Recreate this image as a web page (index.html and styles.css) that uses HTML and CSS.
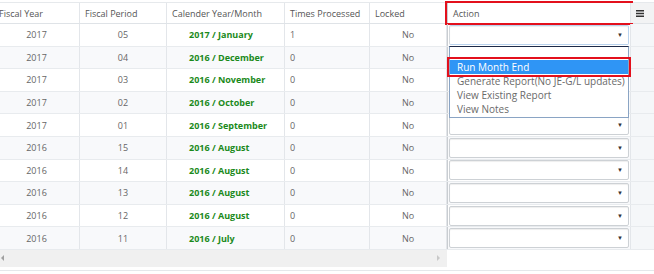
FILE: index.html
```html
<!DOCTYPE html>
<html lang="en">
<head>
    <meta charset="UTF-8" />
    <title>Month End</title>
    <link rel="stylesheet" href="styles.css">
</head>
<body>
    <div class="grid">
        <div class="grid-body">
            <!-- scrolled columns -->
            <div class="scroll-pane">
                <div class="scroll-cols">
                    <div class="row head">
                        <div class="cell">Fiscal Year</div>
                        <div class="cell">Fiscal Period</div>
                        <div class="cell">Calender Year/Month</div>
                        <div class="cell">Times Processed</div>
                        <div class="cell">Locked</div>
                    </div>
                    <div class="row">
                        <div class="cell center">2017</div><div class="cell center">05</div>
                        <div class="cell month">2017 / January</div><div class="cell">1</div><div class="cell center">No</div>
                    </div>
                    <div class="row alt">
                        <div class="cell center">2017</div><div class="cell center">04</div>
                        <div class="cell month">2016 / December</div><div class="cell">0</div><div class="cell center">No</div>
                    </div>
                    <div class="row">
                        <div class="cell center">2017</div><div class="cell center">03</div>
                        <div class="cell month">2016 / November</div><div class="cell">0</div><div class="cell center">No</div>
                    </div>
                    <div class="row alt">
                        <div class="cell center">2017</div><div class="cell center">02</div>
                        <div class="cell month">2016 / October</div><div class="cell">0</div><div class="cell center">No</div>
                    </div>
                    <div class="row">
                        <div class="cell center">2017</div><div class="cell center">01</div>
                        <div class="cell month">2016 / September</div><div class="cell">0</div><div class="cell center">No</div>
                    </div>
                    <div class="row alt">
                        <div class="cell center">2016</div><div class="cell center">15</div>
                        <div class="cell month">2016 / August</div><div class="cell">0</div><div class="cell center">No</div>
                    </div>
                    <div class="row">
                        <div class="cell center">2016</div><div class="cell center">14</div>
                        <div class="cell month">2016 / August</div><div class="cell">0</div><div class="cell center">No</div>
                    </div>
                    <div class="row alt">
                        <div class="cell center">2016</div><div class="cell center">13</div>
                        <div class="cell month">2016 / August</div><div class="cell">0</div><div class="cell center">No</div>
                    </div>
                    <div class="row">
                        <div class="cell center">2016</div><div class="cell center">12</div>
                        <div class="cell month">2016 / August</div><div class="cell">0</div><div class="cell center">No</div>
                    </div>
                    <div class="row alt">
                        <div class="cell center">2016</div><div class="cell center">11</div>
                        <div class="cell month">2016 / July</div><div class="cell">0</div><div class="cell center">No</div>
                    </div>
                </div>
            </div>

            <!-- pinned action column -->
            <div class="pin-pane">
                <div class="pin-row head">
                    <div class="cell action-head marked">Action</div>
                    <div class="cell menu-head">
                        <svg width="8" height="7" viewBox="0 0 8 7"><path d="M0 0.75H8M0 3.5H8M0 6.25H8" stroke="#333" stroke-width="1.4"/></svg>
                    </div>
                </div>
                <div class="pin-row"><div class="cell action"><div class="select focused"><span class="caret">▼</span></div></div><div class="cell menu"></div></div>
                <!-- rows 2-4 sit under the open list -->
                <div class="pin-row alt"><div class="cell action"><div class="select"></div></div><div class="cell menu"></div></div>
                <div class="pin-row"><div class="cell action"><div class="select"></div></div><div class="cell menu"></div></div>
                <div class="pin-row alt"><div class="cell action"><div class="select"></div></div><div class="cell menu"></div></div>
                <div class="pin-row"><div class="cell action"><div class="select"><span class="caret">▼</span></div></div><div class="cell menu"></div></div>
                <div class="pin-row alt"><div class="cell action"><div class="select"><span class="caret">▼</span></div></div><div class="cell menu"></div></div>
                <div class="pin-row"><div class="cell action"><div class="select"><span class="caret">▼</span></div></div><div class="cell menu"></div></div>
                <div class="pin-row alt"><div class="cell action"><div class="select"><span class="caret">▼</span></div></div><div class="cell menu"></div></div>
                <div class="pin-row"><div class="cell action"><div class="select"><span class="caret">▼</span></div></div><div class="cell menu"></div></div>
                <div class="pin-row alt"><div class="cell action"><div class="select"><span class="caret">▼</span></div></div><div class="cell menu"></div></div>

                <!-- open select list -->
                <ul class="dropdown">
                    <li class="empty"></li>
                    <li class="selected marked">Run Month End</li>
                    <li>Generate Report(No JE-G/L updates)</li>
                    <li>View Existing Report</li>
                    <li>View Notes</li>
                </ul>
            </div>
        </div>

        <div class="hscroll">
            <div class="track">
                <span class="arrow-left"></span>
                <span class="arrow-right"></span>
            </div>
        </div>
    </div>
</body>
</html>
```

FILE: styles.css
```css
body {
    margin: 0;
    font-family: "Open Sans", "Liberation Sans", sans-serif;
    background: #fff;
}
.grid {
    margin-top: 2px;
    border-top: 1px solid #e6e9ec;
    border-bottom: 1px solid #e4e8eb;
    padding-bottom: 3px;
}
.grid-body {
    display: flex;
}
.scroll-pane {
    width: 447px;
    overflow: hidden;
}
/* grid is scrolled a few pixels to the right */
.scroll-cols {
    margin-left: -6px;
}
.row, .pin-row {
    display: grid;
    height: 22.6px;
    box-sizing: border-box;
    border-bottom: 1px solid #e8ebee;
    background: #fff;
}
.row {
    grid-template-columns: 86px 87px 118px 85px 77px;
}
.pin-row {
    grid-template-columns: 184px 23px;
}
.row.head, .pin-row.head {
    height: 21px;
    border-bottom-color: #dfe3e7;
}
.alt {
    background: #f8f9fb;
}
.cell {
    display: flex;
    align-items: center;
    padding: 0 5px;
    border-right: 1px solid #e3e6ea;
    font-size: 9px;
    color: #666;
    white-space: nowrap;
    overflow: hidden;
}
.head .cell {
    color: #555;
}
.center {
    justify-content: center;
}
.month {
    padding-left: 22px;
    color: #1b8a1b;
    font-weight: bold;
}
.pin-pane {
    position: relative;
    width: 207px;
}
.action, .action-head {
    border-left: 1px solid #c9cdd1;
    border-right: 1px solid #e3e6ea;
}
.action {
    padding: 0 1px;
}
.marked {
    outline: 2px solid #e3101c;
}
.action-head {
    padding-left: 5px;
    overflow: visible;
}
.menu-head {
    background: #f2f3f4;
    padding-left: 5px;
    border-right: none;
}
.menu {
    border-right: none;
    background: #f5f7f9;
}
.select {
    flex: 1;
    height: 20px;
    box-sizing: border-box;
    border: 1px solid #cdd1d5;
    border-radius: 2px;
    background: #fff;
    box-shadow: inset 0 1px 1px rgba(0, 0, 0, 0.07);
    display: flex;
    align-items: center;
    justify-content: flex-end;
    padding-right: 5px;
}
.select.focused {
    border-color: #b9d3ee;
    border-left-color: #d5d9dd;
}
.caret {
    font-size: 6px;
    color: #333;
}
.dropdown {
    position: absolute;
    top: 43px;
    left: 2px;
    width: 180px;
    box-sizing: border-box;
    margin: 0;
    padding: 0 0 1px;
    list-style: none;
    background: #fff;
    border: 1px solid #8aa4c4;
    border-top-color: #1d2a48;
}
.dropdown li {
    height: 14px;
    line-height: 14px;
    padding-left: 7px;
    font-size: 10px;
    color: #6a6a6a;
}
.dropdown li.empty {
    height: 13px;
}
.dropdown li.selected {
    background: #2f95f5;
    color: #fff;
    outline-offset: 1px;
}
.hscroll {
    height: 17px;
}
.track {
    width: 447px;
    height: 100%;
    background: #f0f0f0;
    display: flex;
    align-items: center;
    justify-content: space-between;
}
.arrow-left {
    width: 0;
    height: 0;
    margin-left: 1px;
    border-top: 3px solid transparent;
    border-bottom: 3px solid transparent;
    border-right: 3px solid #a0a0a0;
}
.arrow-right {
    width: 0;
    height: 0;
    margin-right: 7px;
    border-top: 3px solid transparent;
    border-bottom: 3px solid transparent;
    border-left: 3px solid #c8c8c8;
}
```
